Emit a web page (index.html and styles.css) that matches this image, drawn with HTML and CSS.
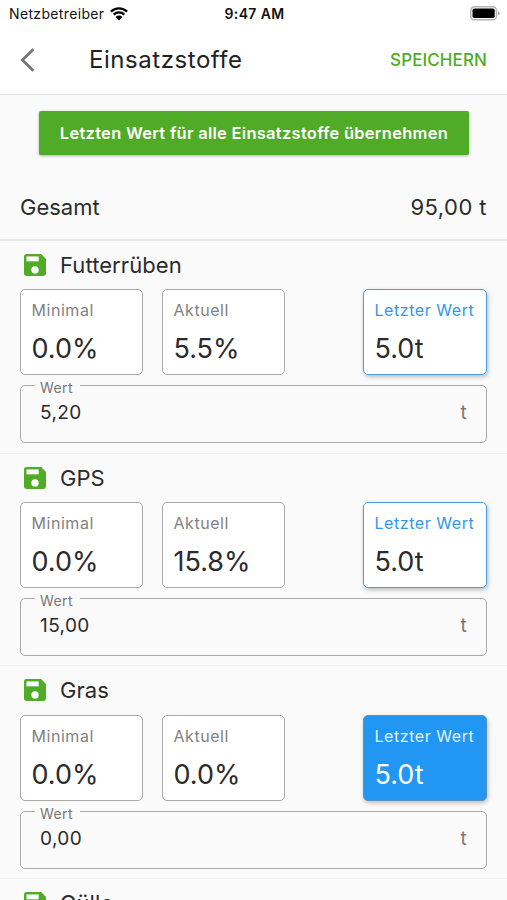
FILE: index.html
```
<!DOCTYPE html>
<html lang="de">
<head>
    <meta charset="UTF-8">
    <meta name="viewport" content="width=device-width, initial-scale=1.0">
    <title>Einsatzstoffe</title>
    <link rel="stylesheet" href="styles.css">
</head>
<body>
    <svg class="sprite" width="0" height="0">
        <symbol id="save" viewBox="3 3 18 18">
            <path d="M17 3H5a2 2 0 0 0-2 2v14a2 2 0 0 0 2 2h14a2 2 0 0 0 2-2V7z" fill="#50ab26"/>
            <path d="M5 5h10v4H5z" fill="#fff"/>
            <circle cx="12" cy="16" r="3" fill="#fff"/>
        </symbol>
    </svg>

    <!-- Header -->
    <header class="header">
        <div class="status-bar">
            <div class="carrier">
                <span>Netzbetreiber</span>
                <svg class="wifi" width="18" height="14" viewBox="0 0 18 14">
                    <path d="M0.9 4.6a11.6 11.6 0 0 1 16.2 0M3.7 7.6a7.6 7.6 0 0 1 10.6 0" fill="none" stroke="#000" stroke-width="2.3"/>
                    <path d="M9 13.4L5.6 10a4.8 4.8 0 0 1 6.8 0z" fill="#000"/>
                </svg>
            </div>
            <span class="time">9:47 AM</span>
            <svg class="battery" width="30" height="15" viewBox="0 0 30 15">
                <rect x="0.8" y="0.8" width="25.6" height="13" rx="3.6" fill="#fff" stroke="#b4b4b4" stroke-width="1.5"/>
                <rect x="2.5" y="2.5" width="22.2" height="9.6" rx="1.8" fill="#000"/>
                <path d="M28 5v4.6q1.7-.7 1.7-2.3t-1.7-2.3z" fill="#a8a8a8"/>
            </svg>
        </div>
        <div class="app-bar">
            <svg class="back" width="16" height="24" viewBox="0 0 16 24">
                <path d="M13.4 1.2L2.4 12l11 10.8" fill="none" stroke="#757575" stroke-width="2.8"/>
            </svg>
            <h1>Einsatzstoffe</h1>
            <span class="save-link">SPEICHERN</span>
        </div>
    </header>

    <button class="apply-all">Letzten Wert für alle Einsatzstoffe übernehmen</button>

    <div class="total">
        <span>Gesamt</span>
        <span class="sum">95,00 t</span>
    </div>

    <!-- Substrates -->
    <section class="item">
        <div class="item-title">
            <svg class="save-icon"><use href="#save"/></svg>
            <h2>Futterrüben</h2>
        </div>
        <div class="cards">
            <div class="card"><span class="label">Minimal</span><span class="value">0.0%</span></div>
            <div class="card"><span class="label">Aktuell</span><span class="value">5.5%</span></div>
            <div class="card last"><span class="label">Letzter Wert</span><span class="value">5.0t</span></div>
        </div>
        <fieldset class="field">
            <legend>Wert</legend>
            <span>5,20</span>
            <span class="unit">t</span>
        </fieldset>
    </section>

    <section class="item">
        <div class="item-title">
            <svg class="save-icon"><use href="#save"/></svg>
            <h2>GPS</h2>
        </div>
        <div class="cards">
            <div class="card"><span class="label">Minimal</span><span class="value">0.0%</span></div>
            <div class="card"><span class="label">Aktuell</span><span class="value">15.8%</span></div>
            <div class="card last"><span class="label">Letzter Wert</span><span class="value">5.0t</span></div>
        </div>
        <fieldset class="field">
            <legend>Wert</legend>
            <span>15,00</span>
            <span class="unit">t</span>
        </fieldset>
    </section>

    <section class="item">
        <div class="item-title">
            <svg class="save-icon"><use href="#save"/></svg>
            <h2>Gras</h2>
        </div>
        <div class="cards">
            <div class="card"><span class="label">Minimal</span><span class="value">0.0%</span></div>
            <div class="card"><span class="label">Aktuell</span><span class="value">0.0%</span></div>
            <div class="card last active"><span class="label">Letzter Wert</span><span class="value">5.0t</span></div>
        </div>
        <fieldset class="field">
            <legend>Wert</legend>
            <span>0,00</span>
            <span class="unit">t</span>
        </fieldset>
    </section>

    <section class="item">
        <div class="item-title">
            <svg class="save-icon"><use href="#save"/></svg>
            <h2>Gülle</h2>
        </div>
    </section>
</body>
</html>
```
FILE: styles.css
```
* {
    box-sizing: border-box;
}
body {
    margin: 0;
    height: 900px;
    overflow: hidden;
    background-color: #fafafa;
    color: #2b2b2b;
    font-family: 'Inter', 'Liberation Sans', sans-serif;
}
h1, h2 {
    margin: 0;
    font-weight: 400;
}
svg {
    display: block;
    flex: none;
}
.sprite {
    display: none;
}
.header {
    height: 95px;
    background: #fff;
    border-bottom: 1px solid #e0e0e0;
}
.status-bar {
    display: grid;
    grid-template-columns: 1fr auto 1fr;
    align-items: center;
    height: 27px;
    padding: 0 7px 0 9px;
    color: #111;
    font-size: 14px;
}
.carrier {
    display: flex;
    align-items: center;
    gap: 6px;
    letter-spacing: 0.35px;
}
.time {
    font-weight: 600;
    letter-spacing: 0.35px;
}
.battery {
    justify-self: end;
}
.app-bar {
    display: flex;
    align-items: center;
    height: 65px;
    padding: 0 20px;
}
h1 {
    margin-left: 53px;
    color: #222;
    font-size: 24px;
    letter-spacing: 0.55px;
}
.save-link {
    margin-left: auto;
    color: #50ab26;
    font-size: 17px;
    font-weight: 500;
    letter-spacing: 0.1px;
}
.apply-all {
    display: block;
    width: 430px;
    height: 44px;
    margin: 16px 0 0 39px;
    padding: 0;
    border: none;
    border-radius: 2px;
    background-color: #50ab26;
    box-shadow: 0 1px 3px rgba(0, 0, 0, 0.3);
    color: #fff;
    font-family: inherit;
    font-size: 16.5px;
    font-weight: 600;
    letter-spacing: 0.27px;
    white-space: nowrap;
}
.total {
    display: flex;
    justify-content: space-between;
    align-items: center;
    height: 86px;
    padding: 19px 20px 0;
    border-bottom: 2px solid #e6e6e6;
    font-size: 22px;
}
.sum {
    letter-spacing: 0.45px;
}
.item {
    height: 212.6px;
    padding: 10px 20px 0;
    border-bottom: 1px solid #efefef;
}
.item-title {
    display: flex;
    align-items: center;
    gap: 14px;
    height: 28px;
    padding-left: 4px;
}
.save-icon {
    width: 22px;
    height: 22px;
}
h2 {
    font-size: 22px;
    letter-spacing: 0.08px;
}
.cards {
    display: flex;
    gap: 19px;
    margin-top: 10.4px;
}
.card {
    display: flex;
    flex-direction: column;
    width: 123px;
    height: 86px;
    padding: 10px 10.5px 0;
    border: 1px solid #a9a9a9;
    border-radius: 5px;
    background: #fff;
    white-space: nowrap;
}
.label {
    color: #828282;
    font-size: 16px;
    line-height: 20px;
    letter-spacing: 0.55px;
}
.value {
    margin-top: 11px;
    font-size: 27px;
    line-height: 36px;
}
.card.last {
    width: 124px;
    margin-left: auto;
    border-color: #4a9fe3;
    box-shadow: 1px 2px 4px rgba(0, 0, 0, 0.25);
}
.last .label {
    color: #2f97ee;
}
.card.active {
    border-color: #5b91bd;
    background: #2196f3;
    color: #fff;
}
.active .label {
    color: #e3f2fd;
}
.field {
    display: flex;
    justify-content: space-between;
    height: 68px;
    margin: 0;
    padding: 5px 19px 0 14px;
    border: 1px solid #a9a9a9;
    border-radius: 5px;
    font-size: 19px;
    letter-spacing: 0.4px;
}
.field span:first-of-type {
    padding-left: 5px;
}
legend {
    padding: 5px 7px 0 5px;
    color: #777;
    font-size: 14px;
    line-height: 16px;
}
.unit {
    color: #777;
}
```
